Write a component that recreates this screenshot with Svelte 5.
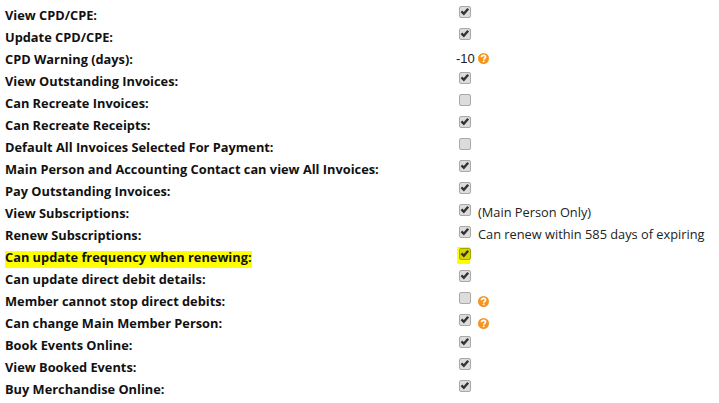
<script>
  const rows = [
    { label: 'View CPD/CPE:', checked: true },
    { label: 'Update CPD/CPE:', checked: true },
    { label: 'CPD Warning (days):', value: '-10', help: true },
    { label: 'View Outstanding Invoices:', checked: true },
    { label: 'Can Recreate Invoices:', checked: false },
    { label: 'Can Recreate Receipts:', checked: true },
    { label: 'Default All Invoices Selected For Payment:', checked: false },
    { label: 'Main Person and Accounting Contact can view All Invoices:', checked: true },
    { label: 'Pay Outstanding Invoices:', checked: true },
    { label: 'View Subscriptions:', checked: true, note: '(Main Person Only)' },
    { label: 'Renew Subscriptions:', checked: true, note: 'Can renew within 585 days of expiring' },
    { label: 'Can update frequency when renewing:', checked: true, mark: true },
    { label: 'Can update direct debit details:', checked: true },
    { label: 'Member cannot stop direct debits:', checked: false, help: true },
    { label: 'Can change Main Member Person:', checked: true, help: true },
    { label: 'Book Events Online:', checked: true },
    { label: 'View Booked Events:', checked: true },
    { label: 'Buy Merchandise Online:', checked: true }
  ];
</script>

{#snippet help()}
  <svg class="help" viewBox="0 0 11 11" aria-hidden="true">
    <circle cx="5.5" cy="5.5" r="5.5" fill="#f7941d" />
    <path d="M3.4 4.2C3.5 3 4.4 2.4 5.5 2.4c1.2 0 2.1.7 2.1 1.7 0 1.4-1.9 1.4-1.9 2.7" fill="none" stroke="#fff" stroke-width="1.6" />
    <rect x="4.8" y="7.6" width="1.7" height="1.5" fill="#fff" />
  </svg>
{/snippet}

<div class="form">
  {#each rows as row}
    <div class="row">
      <div class="label" class:mark={row.mark}><span>{row.label}</span></div>
      <div class="field">
        {#if row.value}
          <span class="value">{row.value}</span>
        {:else}
          <span class="box-wrap" class:mark={row.mark}>
            <span class="box">
              {#if row.checked}
                <svg viewBox="0 0 11 11" class="tick" aria-hidden="true">
                  <path d="M1.6 5.4 4.2 8 9 2.4" fill="none" stroke="#333" stroke-width="2.6" />
                </svg>
              {/if}
            </span>
          </span>
        {/if}
        {#if row.note}<span class="note">{row.note}</span>{/if}
        {#if row.help}{@render help()}{/if}
      </div>
    </div>
  {/each}
</div>

<style>
  :global(body) {
    margin: 0;
    background: #fff;
  }
  .form {
    padding-top: 2px;
    width: 719px;
    height: 401px;
    overflow: hidden;
    font-family: "Open Sans", sans-serif;
    font-size: 12.8px;
    color: #111;
  }
  .row {
    display: flex;
    height: 22px;
    align-items: flex-start;
  }
  .label {
    width: 453px;
    margin-top: 4px;
    line-height: 18px;
    font-weight: 700;
    padding-left: 5px;
    box-sizing: border-box;
    white-space: nowrap;
  }
  .label.mark span {
    display: inline-block;
    padding-bottom: 2px;
    background: linear-gradient(#ff0, #ff0) left bottom / 100% 17px no-repeat;
  }
  .field {
    display: flex;
    align-items: flex-start;
    padding-left: 6px;
    white-space: nowrap;
  }
  .box-wrap {
    display: block;
    padding-top: 4px;
    margin-left: 0;
  }
  .box-wrap.mark {
    background: linear-gradient(#ff0, #ff0) 0 3px / 13px 17px no-repeat;
    margin-left: -2px;
    padding-left: 2px;
    height: 20px;
    box-sizing: border-box;
  }
  .box {
    display: block;
    box-sizing: border-box;
    width: 12px;
    height: 12px;
    background: #dcdcdc;
    border: 1px solid #a9a9a9;
    border-radius: 2px;
    position: relative;
  }
  .mark .box {
    background: #d6d600;
    border-color: #a6a600;
  }
  .tick {
    position: absolute;
    left: 0;
    top: -1px;
    width: 10px;
    height: 11px;
  }
  .value {
    margin-top: 4px;
    margin-left: -3px;
    line-height: 18px;
    font-family: "Liberation Sans", sans-serif;
    font-size: 13px;
    color: #222;
  }
  .note {
    margin-left: 7px;
    margin-top: 3px;
    line-height: 18px;
    color: #222;
  }
  .help {
    width: 11px;
    height: 11px;
    margin-left: 7px;
    margin-top: 8px;
  }
  .value + .help {
    margin-left: 3px;
    margin-top: 7px;
  }
</style>
